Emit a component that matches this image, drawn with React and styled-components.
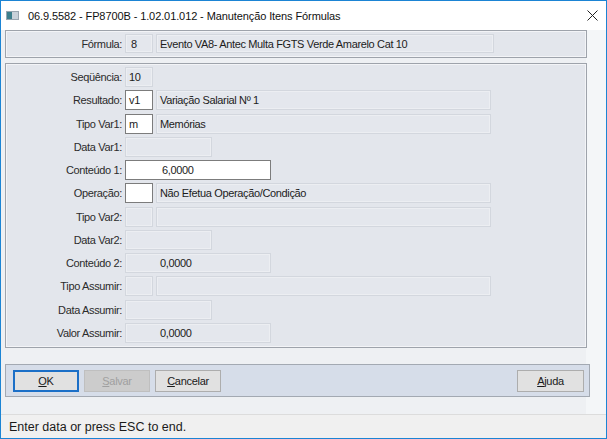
import React from "react";
import styled, { createGlobalStyle } from "styled-components";

const Global = createGlobalStyle`
  html, body { margin: 0; padding: 0; background: #ffffff; }
  #root { width: 607px; height: 439px; }
`;

const UI_FONT = `"Liberation Sans", Arial, sans-serif`;

const Window = styled.div`
  box-sizing: border-box;
  width: 607px;
  height: 439px;
  border: 1px solid #1b84d4;
  display: flex;
  flex-direction: column;
  background: #f0f0f0;
  font-family: ${UI_FONT};
  color: #222;
  overflow: hidden;
`;

const TitleBar = styled.div`
  height: 29px;
  flex: none;
  background: #ffffff;
  display: flex;
  align-items: center;
  padding-left: 5px;
  gap: 9px;
`;

const TitleText = styled.div`
  font-size: 11px;
  color: #111;
  letter-spacing: -0.1px;
`;

const CloseBtn = styled.div`
  margin-left: auto;
  width: 46px;
  height: 29px;
  display: flex;
  align-items: center;
  justify-content: center;
  margin-right: -9px;
`;

const Body = styled.div`
  flex: 1;
  display: flex;
  flex-direction: column;
  padding: 0 17px 0 4px;
  background: linear-gradient(to right, #eef0f3 0, #eef0f3 585px, #f4f6f8 585px);
`;

const Panel = styled.div`
  box-sizing: border-box;
  width: 582px;
  background: #e3e6ec;
  border: 1px solid #9ea3ab;
  box-shadow: inset 0 0 0 1px #f3f4f7;
  margin-top: ${p => p.$mt || 0}px;
  height: ${p => p.$h}px;
  padding: 3px 0 0 1px;
  display: grid;
  grid-auto-rows: 20px;
  row-gap: 3.27px;
  align-content: start;
`;

const Row = styled.div`
  display: grid;
  grid-template-columns: 115px auto;
  column-gap: 3px;
  align-items: center;
`;

const Label = styled.div`
  text-align: right;
  font-size: 11px;
  letter-spacing: -0.35px;
  color: #2b2b2b;
  white-space: nowrap;
`;

const Fields = styled.div`
  display: flex;
  gap: 3px;
  height: 20px;
`;

const Field = styled.div`
  box-sizing: border-box;
  height: ${p => p.$h || 20}px;
  width: ${p => p.$w}px;
  background: ${p => (p.$edit ? "#ffffff" : "#e4e7ed")};
  border: 1px solid ${p => (p.$edit ? "#7c7c7c" : "#d3d7de")};
  box-shadow: ${p => (p.$edit ? "none" : "inset 0 0 0 1px #eceef2")};
  font-size: 11px;
  letter-spacing: -0.35px;
  color: #1c1c1c;
  display: flex;
  align-items: center;
  padding-left: ${p => p.$pl ?? 3}px;
  white-space: nowrap;
  overflow: hidden;
`;

const ButtonBar = styled.div`
  box-sizing: border-box;
  margin-top: 16px;
  width: 585px;
  height: 33px;
  background: #d6dde9;
  border: 1px solid #a3a9b2;
  display: flex;
  align-items: center;
  padding: 0 5px 0 7px;
  gap: 5px;
`;

const Button = styled.div`
  box-sizing: border-box;
  width: ${p => p.$w || 66}px;
  height: 22px;
  display: flex;
  align-items: center;
  justify-content: center;
  font-size: 11px;
  letter-spacing: -0.3px;
  background: ${p => (p.$disabled ? "#cccccc" : "#e1e1e1")};
  color: ${p => (p.$disabled ? "#a0a0a0" : "#1a1a1a")};
  border: ${p => (p.$focus ? "2px solid #1b6fc7" : p.$disabled ? "1px solid #bfbfbf" : "1px solid #adadad")};
  margin-left: ${p => (p.$right ? "auto" : "0")};
  u { text-decoration: underline; }
`;

const StatusBar = styled.div`
  flex: none;
  height: 23px;
  border-top: 1px solid #dcdcdc;
  background: #f0f0f0;
  display: flex;
  align-items: center;
  padding-left: 8px;
  font-size: 12.5px;
  color: #1a1a1a;
`;

const Spacer = styled.div`
  flex: 1;
`;

function AppIcon() {
  return (
    <svg width="13" height="9" viewBox="0 0 13 9">
      <rect x="0.5" y="0.5" width="12" height="8" fill="#c9d2da" stroke="#9aa6b0" />
      <rect x="1" y="1" width="5" height="7" fill="#3d7f8c" />
    </svg>
  );
}

function CloseIcon() {
  return (
    <svg width="11" height="11" viewBox="0 0 11 11">
      <path d="M0.5 0.5 L10.5 10.5 M10.5 0.5 L0.5 10.5" stroke="#222" strokeWidth="1" />
    </svg>
  );
}

const rows = [
  { label: "Seqüência:", fields: [{ w: 28, v: "10" }] },
  { label: "Resultado:", fields: [{ w: 28, v: "v1", edit: true }, { w: 335, v: "Variação Salarial Nº 1" }] },
  { label: "Tipo Var1:", fields: [{ w: 28, v: "m", edit: true }, { w: 335, v: "Memórias" }] },
  { label: "Data Var1:", fields: [{ w: 87, v: "" }] },
  { label: "Conteúdo 1:", fields: [{ w: 146, v: "6,0000", edit: true, pl: 36 }] },
  { label: "Operação:", fields: [{ w: 28, v: "", edit: true }, { w: 335, v: "Não Efetua Operação/Condição" }] },
  { label: "Tipo Var2:", fields: [{ w: 28, v: "" }, { w: 335, v: "" }] },
  { label: "Data Var2:", fields: [{ w: 87, v: "" }] },
  { label: "Conteúdo 2:", fields: [{ w: 146, v: "0,0000", pl: 34 }] },
  { label: "Tipo Assumir:", fields: [{ w: 28, v: "" }, { w: 335, v: "" }] },
  { label: "Data Assumir:", fields: [{ w: 87, v: "" }] },
  { label: "Valor Assumir:", fields: [{ w: 146, v: "0,0000", pl: 34 }] },
];

export default function App() {
  return (
    <>
      <Global />
      <Window>
        <TitleBar>
          <AppIcon />
          <TitleText>06.9.5582 - FP8700B - 1.02.01.012 - Manutenção Itens Fórmulas</TitleText>
          <CloseBtn>
            <CloseIcon />
          </CloseBtn>
        </TitleBar>
        <Body>
          <Panel $h={28}>
            <Row>
              <Label>Fórmula:</Label>
              <Fields>
                <Field $w={28} $h={19} $pl={5}>8</Field>
                <Field $w={338} $h={19}>Evento VA8- Antec Multa FGTS Verde Amarelo Cat 10</Field>
              </Fields>
            </Row>
          </Panel>
          <Panel $mt={5} $h={285}>
            {rows.map(r => (
              <Row key={r.label}>
                <Label>{r.label}</Label>
                <Fields>
                  {r.fields.map((f, i) => (
                    <Field key={i} $w={f.w} $edit={f.edit} $pl={f.pl}>
                      {f.v}
                    </Field>
                  ))}
                </Fields>
              </Row>
            ))}
          </Panel>
          <ButtonBar>
            <Button $focus>
              <span><u>O</u>K</span>
            </Button>
            <Button $disabled>
              <span><u>S</u>alvar</span>
            </Button>
            <Button>
              <span><u>C</u>ancelar</span>
            </Button>
            <Button $right $w={67}>
              <span><u>A</u>juda</span>
            </Button>
          </ButtonBar>
          <Spacer />
        </Body>
        <StatusBar>Enter data or press ESC to end.</StatusBar>
      </Window>
    </>
  );
}
